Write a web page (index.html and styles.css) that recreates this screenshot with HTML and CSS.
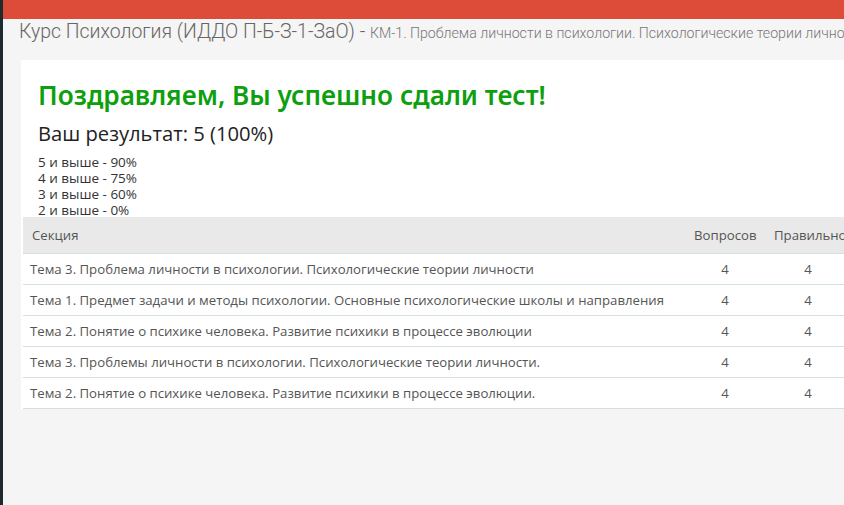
FILE: index.html
```html
<!DOCTYPE html>
<html lang="ru">
<head>
  <meta charset="UTF-8" />
  <title>Результат теста</title>
  <link rel="stylesheet" href="styles.css">
</head>
<body>
  <div class="topbar"></div>

  <div class="page">
    <div class="content-header">
      <h1>Курс Психология (ИДДО П-Б-З-1-ЗаО) - <small>КМ-1. Проблема личности в психологии. Психологические теории личности</small></h1>
    </div>

    <div class="card">
      <div class="result">
        <h2>Поздравляем, Вы успешно сдали тест!</h2>
        <p class="score">Ваш результат: 5 (100%)</p>
        <ul class="grades">
          <li>5 и выше - 90%</li>
          <li>4 и выше - 75%</li>
          <li>3 и выше - 60%</li>
          <li>2 и выше - 0%</li>
        </ul>
      </div>

      <table class="sections">
        <thead>
          <tr>
            <th class="col-name">Секция</th>
            <th class="col-num">Вопросов</th>
            <th class="col-num col-right">Правильно</th>
            <th class="col-num col-pct">Процент</th>
          </tr>
        </thead>
        <tbody>
          <tr>
            <td>Тема 3. Проблема личности в психологии. Психологические теории личности</td>
            <td class="num">4</td>
            <td class="num">4</td>
            <td class="num">100%</td>
          </tr>
          <tr>
            <td>Тема 1. Предмет задачи и методы психологии. Основные психологические школы и направления</td>
            <td class="num">4</td>
            <td class="num">4</td>
            <td class="num">100%</td>
          </tr>
          <tr>
            <td>Тема 2. Понятие о психике человека. Развитие психики в процессе эволюции</td>
            <td class="num">4</td>
            <td class="num">4</td>
            <td class="num">100%</td>
          </tr>
          <tr>
            <td>Тема 3. Проблемы личности в психологии. Психологические теории личности.</td>
            <td class="num">4</td>
            <td class="num">4</td>
            <td class="num">100%</td>
          </tr>
          <tr>
            <td>Тема 2. Понятие о психике человека. Развитие психики в процессе эволюции.</td>
            <td class="num">4</td>
            <td class="num">4</td>
            <td class="num">100%</td>
          </tr>
        </tbody>
      </table>
    </div>
  </div>
</body>
</html>
```

FILE: styles.css
```css
*, *::before, *::after {
  box-sizing: border-box;
  margin: 0;
  padding: 0;
}

html, body {
  height: 100%;
}

body {
  font-family: "Open Sans", "Noto Sans", sans-serif;
  background-color: #f5f5f5;
  border-left: 3px solid #1f2a2f;
  overflow: hidden;
}

.topbar {
  height: 19px;
  background-color: #dd4b39;
}

.page {
  width: 1100px;
}

.content-header {
  padding: 1px 0 0 16px;
  white-space: nowrap;
}

.content-header h1 {
  display: inline-block;
  font-family: Roboto, "Liberation Sans", sans-serif;
  font-weight: 300;
  font-size: 21px;
  line-height: 23px;
  color: #666;
  transform: scaleX(0.925);
  transform-origin: left center;
}

.content-header small {
  font-size: 15.3px;
  color: #777;
}

.card {
  margin: 15px 0 0 18px;
  padding-left: 2px;
  background-color: #fff;
}

.result {
  padding: 19px 0 0 15px;
}

.result h2 {
  font-family: "Noto Sans", sans-serif;
  font-weight: 600;
  font-size: 26.2px;
  line-height: 32px;
  color: #0e9f0e;
}

.score {
  margin-top: 8px;
  font-size: 20.2px;
  line-height: 28px;
  color: #222;
}

.grades {
  list-style: none;
  margin-top: 7px;
  font-size: 13.5px;
  line-height: 16px;
  color: #333;
}

.sections {
  border-collapse: collapse;
  font-size: 13.2px;
  color: #555;
  table-layout: fixed;
  width: 928px;
  margin-top: -1px;
}

.sections th {
  background-color: #e9e9e9;
  font-weight: 400;
  height: 36px;
  padding: 0 9px;
  text-align: left;
  white-space: nowrap;
}

.sections td {
  height: 31px;
  padding: 0 7px;
  border-top: 1px solid #d3e2de;
  white-space: nowrap;
}

.sections tbody tr:last-child td {
  border-bottom: 1px solid #d3e2de;
}

.col-name {
  width: 662px;
}

.col-num {
  width: 80px;
}

.sections th.col-num {
  text-align: center;
}

.col-right {
  width: 86px;
}

.col-pct {
  width: 100px;
}

.sections td.num {
  text-align: center;
}
```
